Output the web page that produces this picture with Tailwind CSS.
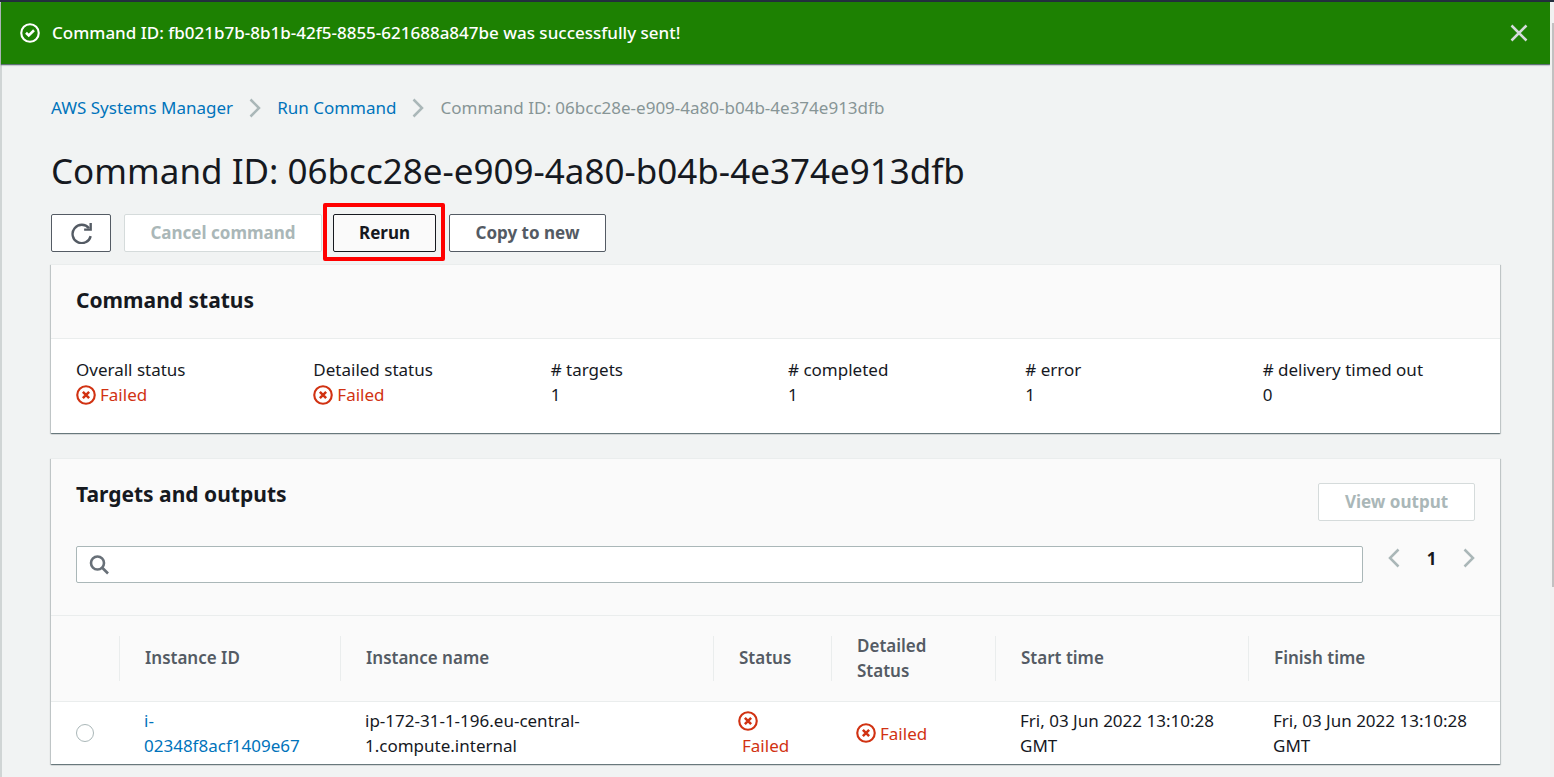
<!DOCTYPE html>
<html lang="en">
<head>
<meta charset="utf-8">
<meta name="viewport" content="width=device-width, initial-scale=1">
<title>AWS Systems Manager - Run Command</title>
<script src="https://cdn.jsdelivr.net/npm/@tailwindcss/browser@4"></script>
</head>
<body class="bg-[#f1f3f3] font-['Noto_Sans',sans-serif] text-[17px] leading-[25px] text-[#16191f]">
<svg class="hidden">
  <symbol id="failed" viewBox="0 0 16 16"><g fill="none" stroke="currentColor" stroke-width="2"><circle cx="8" cy="8" r="7" stroke-width="1.700"/><path d="M5.500 5.500l5 5M10.500 5.500l-5 5"/></g></symbol>
  <symbol id="right" viewBox="0 0 12 20"><path d="M1.500 1.500L10 10l-8.500 8.500" fill="none" stroke="currentColor" stroke-width="2.500"/></symbol>
  <symbol id="left" viewBox="0 0 12 20"><path d="M10.500 1.500L2 10l8.500 8.500" fill="none" stroke="currentColor" stroke-width="2.500"/></symbol>
</svg>
<div class="flex min-h-screen flex-col border-t-2 border-[#232f3e]">
 <div class="flex flex-1">
  <div class="min-w-0 flex-1 border-l-2 border-[#d0d5d5]">
    <div role="status" class="-ml-px flex h-[62px] items-center gap-3 bg-[#1d8102] pr-[22px] pl-[19px] text-white shadow-[0_1px_1px_0_rgba(0,28,36,0.5),0_1px_2px_0_rgba(0,28,36,0.3)]">
      <svg class="size-5 shrink-0" viewBox="0 0 16 16" fill="none" stroke="currentColor" stroke-width="2"><circle cx="8" cy="8" r="7" stroke-width="1.700"/><path d="M4.800 7.800l2.200 2.200 4.200-4.200"/></svg>
      <p class="flex-1 pb-0.5 font-medium">Command ID: fb021b7b-8b1b-42f5-8855-621688a847be was successfully sent!</p>
      <button type="button" aria-label="Dismiss" class="text-[#d5dbdb]"><svg class="size-[18px]" viewBox="0 0 18 18" fill="none" stroke="currentColor" stroke-width="2.500"><path d="M1.500 1.500l15 15M16.500 1.500l-15 15"/></svg></button>
    </div>
    <main class="pt-[31px] pr-[50px] pb-3 pl-[49px]">
      <nav aria-label="Breadcrumb">
        <ol class="flex items-center gap-4 text-[#879596]">
          <li><a href="#" class="text-[#0073bb]">AWS Systems Manager</a></li>
          <li aria-hidden="true"><svg class="h-5 w-3 text-[#aab7b8]"><use href="#right"/></svg></li>
          <li><a href="#" class="text-[#0073bb]">Run Command</a></li>
          <li aria-hidden="true"><svg class="h-5 w-3 text-[#aab7b8]"><use href="#right"/></svg></li>
          <li>Command ID: 06bcc28e-e909-4a80-b04b-4e374e913dfb</li>
        </ol>
      </nav>
      <h1 class="mt-7 text-[35px] leading-[46px]">Command ID: 06bcc28e-e909-4a80-b04b-4e374e913dfb</h1>
      <div class="mt-5 flex gap-[13px] font-bold text-[#545b64]">
        <button type="button" aria-label="Refresh" class="flex h-[38px] w-[60px] items-center justify-center rounded-xs border border-[#545b64] bg-white"><svg class="size-[21px]" viewBox="0 0 16 16" fill="none" stroke="currentColor" stroke-width="1.800"><path d="M15 10a7 7 0 1 1-1.300-6"/><path d="M15 0v5h-5"/></svg></button>
        <button type="button" disabled class="h-[38px] w-[198px] rounded-xs border border-[#d5dbdb] bg-white pb-0.5 text-[#aab7b8]">Cancel command</button>
        <div class="relative -ml-[2px]">
          <button type="button" class="h-[38px] w-[103px] rounded-xs border border-[#16191f] bg-[#fafafa] pb-0.5 text-[#16191f]">Rerun</button>
          <div class="pointer-events-none absolute -top-[11px] -right-[9px] -bottom-[9px] -left-[10px] rounded-xs border-4 border-[#ff0000]"></div>
        </div>
        <button type="button" class="h-[38px] w-[157px] rounded-xs border border-[#545b64] bg-white pb-0.5">Copy to new</button>
      </div>

      <section class="mt-3 border-t border-[#eaeded] bg-white shadow-[0_1px_1px_0_rgba(0,28,36,0.4),1px_1px_1px_0_rgba(0,28,36,0.15),-1px_1px_1px_0_rgba(0,28,36,0.15)]">
        <h2 class="border-b border-[#eaeded] bg-[#fafafa] px-[25px] pt-5 pb-[23px] text-[21px] leading-[30px] font-bold">Command status</h2>
        <dl class="grid grid-cols-6 pt-[18px] pb-[26px] pl-[25px]">
          <div><dt>Overall status</dt><dd class="flex items-center gap-1 text-[#d13212]"><svg class="size-5"><use href="#failed"/></svg>Failed</dd></div>
          <div><dt>Detailed status</dt><dd class="flex items-center gap-1 text-[#d13212]"><svg class="size-5"><use href="#failed"/></svg>Failed</dd></div>
          <div><dt># targets</dt><dd>1</dd></div>
          <div><dt># completed</dt><dd>1</dd></div>
          <div><dt># error</dt><dd>1</dd></div>
          <div><dt class="whitespace-nowrap"># delivery timed out</dt><dd>0</dd></div>
        </dl>
      </section>

      <section class="mt-[25px] border-t border-[#eaeded] bg-white shadow-[0_1px_1px_0_rgba(0,28,36,0.4),1px_1px_1px_0_rgba(0,28,36,0.15),-1px_1px_1px_0_rgba(0,28,36,0.15)]">
        <div class="border-b border-[#eaeded] bg-[#fafafa] px-[25px] pt-5 pb-8">
          <div class="flex items-start justify-between">
            <h2 class="text-[21px] leading-[30px] font-bold">Targets and outputs</h2>
            <button type="button" disabled class="mt-1 h-[38px] w-[157px] rounded-xs border border-[#d5dbdb] bg-white pb-0.5 font-bold text-[#aab7b8]">View output</button>
          </div>
          <div class="mt-[25px] flex items-start gap-[25px]">
            <label class="flex h-[37px] flex-1 items-center gap-2 rounded-xs border border-[#aab7b8] bg-white px-3">
              <svg class="size-5 text-[#687078]" viewBox="0 0 20 20" fill="none" stroke="currentColor" stroke-width="2.600"><circle cx="8.500" cy="8" r="6.500"/><path d="M13 12.500l6 6"/></svg>
              <input type="search" aria-label="Search targets" class="min-w-0 flex-1 outline-none">
            </label>
            <div class="flex h-6 w-[87px] items-center justify-between font-bold">
              <button type="button" disabled aria-label="Previous page" class="text-[#aab7b8]"><svg class="h-5 w-3"><use href="#left"/></svg></button>
              <span>1</span>
              <button type="button" disabled aria-label="Next page" class="text-[#aab7b8]"><svg class="h-5 w-3"><use href="#right"/></svg></button>
            </div>
          </div>
        </div>
        <table class="w-full table-fixed text-left">
          <colgroup><col class="w-[69px]"><col class="w-[221px]"><col><col class="w-[118px]"><col class="w-[164px]"><col class="w-[253px]"><col class="w-[251px]"></colgroup>
          <thead class="border-b border-[#eaeded] bg-[#fafafa] text-[#545b64]">
            <tr>
              <th class="py-5"><div class="h-[45px] border-r border-[#eaeded]"></div></th>
              <th class="font-semibold"><div class="flex h-[45px] items-center border-r border-[#eaeded] pb-0.5 pl-[25px]">Instance ID</div></th>
              <th class="font-semibold"><div class="flex h-[45px] items-center border-r border-[#eaeded] pb-0.5 pl-[25px]">Instance name</div></th>
              <th class="font-semibold"><div class="flex h-[45px] items-center border-r border-[#eaeded] pb-0.5 pl-[25px]">Status</div></th>
              <th class="font-semibold"><div class="flex h-[45px] items-center border-r border-[#eaeded] pr-10 pb-0.5 pl-[25px]">Detailed Status</div></th>
              <th class="font-semibold"><div class="flex h-[45px] items-center border-r border-[#eaeded] pb-0.5 pl-[25px]">Start time</div></th>
              <th class="font-semibold"><div class="flex h-[45px] items-center pb-0.5 pl-[25px]">Finish time</div></th>
            </tr>
          </thead>
          <tbody>
            <tr>
              <td class="pl-[25px]"><input type="radio" name="instance" aria-label="Select instance i-02348f8acf1409e67" class="block size-[18px] appearance-none rounded-full border border-[#aab7b8] bg-white"></td>
              <td class="py-[6px] pr-9 pl-6"><a href="#" class="text-[#0073bb]">i-<wbr>02348f8acf1409e67</a></td>
              <td class="pr-24 pl-6">ip-172-31-1-196.eu-central-1.compute.internal</td>
              <td class="pl-6 text-[#d13212]"><span class="flex flex-col"><svg class="mt-[3px] mb-[2px] size-5"><use href="#failed"/></svg><span class="pl-1">Failed</span></span></td>
              <td class="pl-6 text-[#d13212]"><span class="flex items-center gap-1"><svg class="size-5"><use href="#failed"/></svg>Failed</span></td>
              <td class="pl-6">Fri, 03 Jun 2022 13:10:28 GMT</td>
              <td class="pl-6">Fri, 03 Jun 2022 13:10:28 GMT</td>
            </tr>
          </tbody>
        </table>
      </section>
    </main>
  </div>
  <div aria-hidden="true" class="w-1 bg-[#f1f1f1] pt-[21px] pl-[2px]"><div class="h-[564px] bg-[#c1c1c1]"></div></div>
 </div>
</div>
</body>
</html>
